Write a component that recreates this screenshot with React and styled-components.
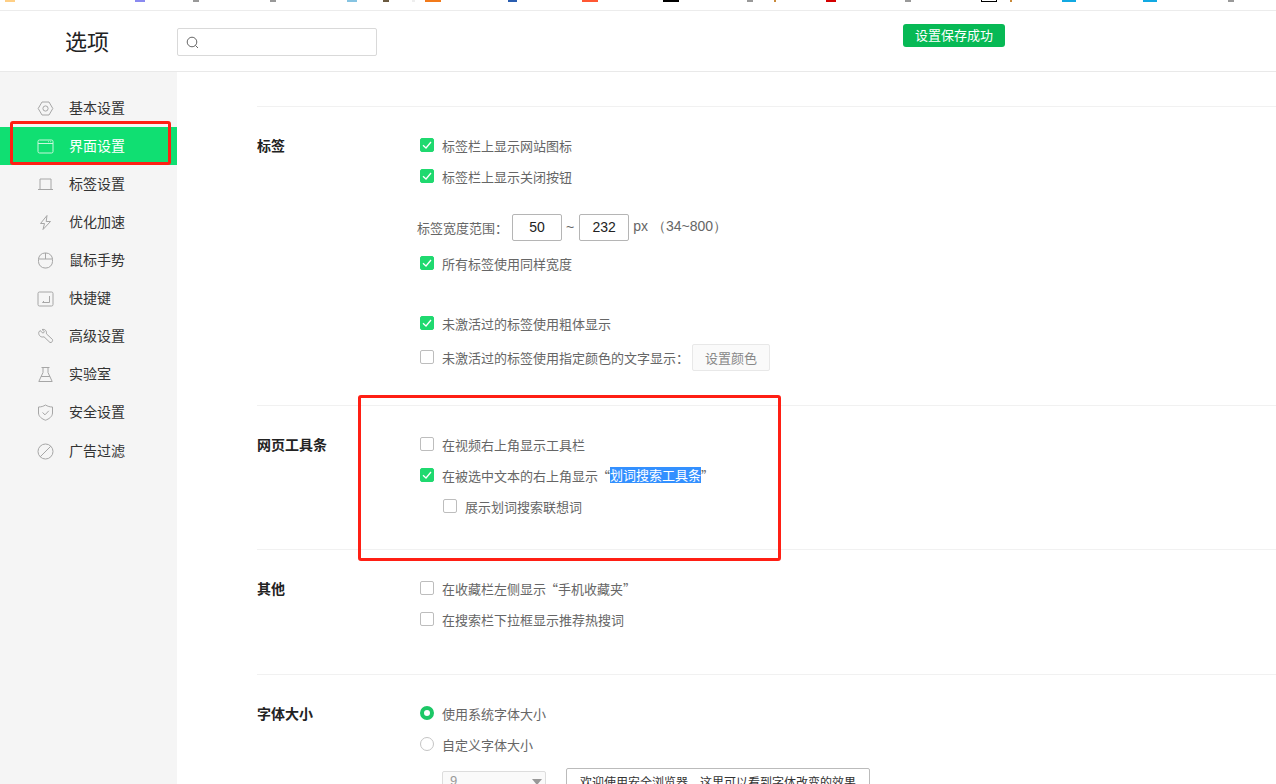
import React from 'react';
import styled, { createGlobalStyle } from 'styled-components';

const FONT = '"Noto Sans CJK SC", "Liberation Sans", sans-serif';

const GlobalStyle = createGlobalStyle`
  html, body {
    margin: 0;
    height: 100%;
    overflow: hidden;
    background: #fff;
    font-family: ${FONT};
  }
  * { box-sizing: border-box; }
`;

const Page = styled.div`
  position: relative;
  width: 1276px;
  height: 784px;
  overflow: hidden;
  display: flex;
  flex-direction: column;
`;

const FavStrip = styled.div`
  position: relative;
  height: 11px;
  flex: none;
  border-bottom: 1px solid #ececec;
  overflow: hidden;
`;

const Fav = styled.span`
  position: absolute;
  top: 0;
  left: ${p => p.$x}px;
  width: ${p => p.$w}px;
  height: 2px;
  background: ${p => p.$c};
`;

const FavOutline = styled.span`
  position: absolute;
  top: -2px;
  left: 981px;
  width: 16px;
  height: 4px;
  border: 1px solid #000;
  background: #fff;
`;

const Header = styled.header`
  height: 61px;
  flex: none;
  display: flex;
  align-items: center;
  border-bottom: 1px solid #e9e9e9;
  position: relative;
`;

const Title = styled.h1`
  margin: 0 0 2px 65px;
  width: 112px;
  font-size: 22px;
  font-weight: 400;
  color: #222;
`;

const SearchBox = styled.div`
  width: 200px;
  height: 28px;
  margin-top: 2px;
  border: 1px solid #d9d9d9;
  border-radius: 2px;
  display: flex;
  align-items: center;
  padding-left: 7px;
  color: #666;
`;

const Toast = styled.div`
  position: absolute;
  left: 903px;
  top: 13px;
  width: 102px;
  height: 23px;
  background: #07b955;
  border-radius: 3px;
  color: #fff;
  font-size: 13px;
  line-height: 22px;
  text-align: center;
`;

const Body = styled.div`
  flex: 1;
  display: flex;
  min-height: 0;
`;

const Sidebar = styled.nav`
  width: 177px;
  flex: none;
  background: #f5f5f5;
  padding-top: 17px;
`;

const NavItem = styled.div`
  height: 38px;
  display: flex;
  align-items: center;
  padding-left: 37px;
  gap: 15px;
  font-size: 14px;
  color: ${p => (p.$active ? '#fff' : '#333')};
  background: ${p => (p.$active ? '#10df72' : 'transparent')};
  &:last-child {
    margin-top: 1px;
  }
`;

const NavLabel = styled.span`
  margin-bottom: 2px;
`;

const NavIcon = styled.svg`
  width: 17px;
  height: 17px;
  flex: none;
  fill: none;
  stroke: ${p => (p.$active ? '#c8f7dc' : '#a6a6a6')};
  stroke-width: 1;
`;

const Main = styled.main`
  flex: 1;
  padding: 34px 0 0 80px;
  overflow: hidden;
`;

const Section = styled.section`
  display: flex;
  border-top: 1px solid #f1f1f1;
  height: ${p => p.$h}px;
  padding-top: 29px;
`;

const SectionLabel = styled.div`
  width: 163px;
  flex: none;
  font-size: 14px;
  font-weight: 700;
  color: #222;
  line-height: 18px;
`;

const Options = styled.div`
  flex: 1;
  display: flex;
  flex-direction: column;
`;

const Row = styled.div`
  height: 18px;
  display: flex;
  align-items: center;
  font-size: 13px;
  color: #666;
  margin-top: ${p => p.$mt || 0}px;
  margin-left: ${p => p.$indent || 0}px;
`;

const Box = styled.span`
  width: 14px;
  height: 14px;
  flex: none;
  margin-right: 8px;
  border-radius: 2px;
  border: 1px solid ${p => (p.$on ? '#1fd96f' : '#bdbdbd')};
  background: ${p => (p.$on ? '#1fd96f' : '#fff')};
  display: flex;
  align-items: center;
  justify-content: center;
`;

const Radio = styled.span`
  width: 14px;
  height: 14px;
  flex: none;
  margin-right: 8px;
  border-radius: 50%;
  border: ${p => (p.$on ? '4px solid #1cc766' : '1px solid #c4c4c4')};
  background: #fff;
`;

const WidthRow = styled.div`
  height: 28px;
  display: flex;
  align-items: center;
  font-size: 13px;
  color: #666;
  margin: 28px 0 13px -3px;
`;

const NumInput = styled.div`
  width: 50px;
  height: 27px;
  border: 1px solid #b5b5b5;
  border-radius: 2px;
  color: #222;
  font-family: "Liberation Sans", sans-serif;
  font-size: 14px;
  line-height: 25px;
  text-align: center;
  margin-left: ${p => p.$ml || 0}px;
`;

const Latin = styled.span`
  font-family: "Liberation Sans", sans-serif;
  font-size: 14px;
  color: #666;
  margin: ${p => p.$m || 0};
`;

const Button = styled.button`
  height: 27px;
  width: 78px;
  margin-left: 3px;
  padding: 0;
  border: 1px solid #e8e8e8;
  border-radius: 2px;
  background: #fafafa;
  color: #888;
  font-family: ${FONT};
  font-size: 13px;
`;

const Quote = styled.span`
  margin-left: -1px;
`;

const Picked = styled.span`
  background: #3390ff;
  color: #fff;
  line-height: 16px;
`;

const FontRow = styled.div`
  display: flex;
  margin: 15px 0 0 22px;
  align-items: flex-start;
`;

const Select = styled.div`
  width: 104px;
  height: 30px;
  margin-top: 3px;
  border: 1px solid #ddd;
  border-radius: 2px;
  background: #fafafa;
  color: #999;
  font-size: 13px;
  font-family: "Liberation Sans", sans-serif;
  padding: 1px 0 0 7px;
  position: relative;
  &::after {
    content: '';
    position: absolute;
    right: 3px;
    top: 7px;
    border: 5px solid transparent;
    border-top: 6px solid #999;
  }
`;

const Preview = styled.div`
  width: 304px;
  height: 30px;
  margin-left: 20px;
  border: 1px solid #bbb;
  border-radius: 2px;
  font-size: 12px;
  color: #333;
  line-height: 26px;
  text-align: center;
  white-space: nowrap;
`;

const Callout = styled.div`
  position: absolute;
  left: ${p => p.$x}px;
  top: ${p => p.$y}px;
  width: ${p => p.$w}px;
  height: ${p => p.$h}px;
  border: 3px solid #ff1f14;
  border-radius: 3px;
  pointer-events: none;
`;

const Check = () => (
  <svg width="10" height="10" viewBox="0 0 10 10" fill="none" stroke="#fff" strokeWidth="1.3">
    <path d="M1 5.2 L4 8 L9 2" />
  </svg>
);

const CheckRow = ({ on, children, ...rest }) => (
  <Row {...rest}>
    <Box $on={on}>{on && <Check />}</Box>
    {children}
  </Row>
);

const navItems = [
  ['基本设置', <><path d="M5 2 H12 L15.8 8.5 L12 15 H5 L1.2 8.5 Z" /><circle cx="8.5" cy="8.5" r="2.6" /></>],
  ['界面设置', <><rect x="1" y="2" width="15" height="13" rx="1.5" /><path d="M1 5.5 H16 M11 3.7 H11.8 M13.3 3.7 H14.1" /></>],
  ['标签设置', <path d="M3 13.5 V3 H14 V13.5 M1 13.5 H16" />],
  ['优化加速', <path d="M10 1.5 L3.5 9.5 H7.5 L6 15.5 L13.5 7.5 H9.2 Z" />],
  ['鼠标手势', <><rect x="1.5" y="1" width="14" height="15" rx="6.5" /><path d="M1.5 7 H15.5 M8.5 1 V7" /></>],
  ['快捷键', <><rect x="1" y="2" width="15" height="14" rx="1.5" /><path d="M12.5 6 V12.5 H5.5 M5.5 12.5 L7 11" /></>],
  ['高级设置', <path d="M3 2.5 L6 5.2 L7.5 3.8 L5 1.5 C8 0.8 10 3 9.4 5.8 L15.5 11.5 C16 13 14.8 15 13 14.5 L7 8.8 C4 9.8 1.2 7.5 1.8 4.2 Z" />],
  ['实验室', <path d="M4.5 1.5 H12.5 M6 1.5 V6.5 L1.8 15.5 H15.2 L11 6.5 V1.5 M4 10.5 H13" />],
  ['安全设置', <><path d="M8.5 1 C10.5 2.3 13 3 15.5 3 V9 C15.5 12.5 12 15 8.5 16.2 C5 15 1.5 12.5 1.5 9 V3 C4 3 6.5 2.3 8.5 1 Z" /><path d="M5.5 8.5 L8 10.8 L11.8 6.8" /></>],
  ['广告过滤', <><circle cx="8.5" cy="8.5" r="7.5" /><path d="M3.2 13.8 L13.8 3.2" /></>],
];

const favicons = [
  [5, 10, '#ffcf85'], [135, 10, '#8a8af0'], [193, 6, '#999'], [270, 6, '#999'], [347, 10, '#86c4e2'],
  [383, 6, '#6b5a40'], [412, 3, '#eee'], [425, 16, '#f27a1a'], [508, 9, '#2a5db0'], [582, 16, '#ff5733'],
  [663, 16, '#000'], [747, 6, '#999'], [774, 2, '#c98a3a'], [826, 10, '#d40000'], [905, 6, '#999'],
  [1010, 2, '#c98a3a'], [1062, 14, '#12a9e2'], [1143, 14, '#12a9e2'], [1228, 6, '#999'],
];

const App = () => (
  <Page>
    <GlobalStyle />
    <FavStrip>
      {favicons.map(([x, w, c]) => <Fav key={x} $x={x} $w={w} $c={c} />)}
      <FavOutline />
    </FavStrip>
    <Header>
      <Title>选项</Title>
      <SearchBox>
        <svg width="15" height="15" viewBox="0 0 15 15" fill="none" stroke="currentColor" strokeWidth="1">
          <circle cx="7" cy="7" r="4.8" />
          <path d="M10.4 10.4 L13 13" />
        </svg>
      </SearchBox>
      <Toast>设置保存成功</Toast>
    </Header>
    <Body>
      <Sidebar>
        {navItems.map(([label, icon], i) => (
          <NavItem key={label} $active={i === 1}>
            <NavIcon viewBox="0 0 17 17" $active={i === 1}>{icon}</NavIcon>
            <NavLabel>{label}</NavLabel>
          </NavItem>
        ))}
      </Sidebar>
      <Main>
        <Section $h={299}>
          <SectionLabel>标签</SectionLabel>
          <Options>
            <CheckRow on>标签栏上显示网站图标</CheckRow>
            <CheckRow on $mt={13}>标签栏上显示关闭按钮</CheckRow>
            <WidthRow>
              标签宽度范围：
              <NumInput $ml={4}>50</NumInput>
              <Latin $m="0 5px 0 4px">~</Latin>
              <NumInput>232</NumInput>
              <Latin $m="0 0 0 4px">px&nbsp;（34~800）</Latin>
            </WidthRow>
            <CheckRow on>所有标签使用同样宽度</CheckRow>
            <CheckRow on $mt={42}>未激活过的标签使用粗体显示</CheckRow>
            <CheckRow $mt={16}>
              未激活过的标签使用指定颜色的文字显示：
              <Button>设置颜色</Button>
            </CheckRow>
          </Options>
        </Section>
        <Section $h={144}>
          <SectionLabel>网页工具条</SectionLabel>
          <Options>
            <CheckRow>在视频右上角显示工具栏</CheckRow>
            <CheckRow on $mt={13}>在被选中文本的右上角显示<Quote>“</Quote><Picked>划词搜索工具条</Picked>”</CheckRow>
            <CheckRow $mt={13} $indent={23}>展示划词搜索联想词</CheckRow>
          </Options>
        </Section>
        <Section $h={125}>
          <SectionLabel>其他</SectionLabel>
          <Options>
            <CheckRow>在收藏栏左侧显示<Quote>“</Quote>手机收藏夹”</CheckRow>
            <CheckRow $mt={13}>在搜索栏下拉框显示推荐热搜词</CheckRow>
          </Options>
        </Section>
        <Section $h={120}>
          <SectionLabel>字体大小</SectionLabel>
          <Options>
            <Row><Radio $on />使用系统字体大小</Row>
            <Row $mt={13}><Radio />自定义字体大小</Row>
            <FontRow>
              <Select>9</Select>
              <Preview>欢迎使用安全浏览器，这里可以看到字体改变的效果</Preview>
            </FontRow>
          </Options>
        </Section>
      </Main>
    </Body>
    <Callout $x={10} $y={121} $w={161} $h={44} />
    <Callout $x={358} $y={395} $w={423} $h={166} />
  </Page>
);

export default App;
